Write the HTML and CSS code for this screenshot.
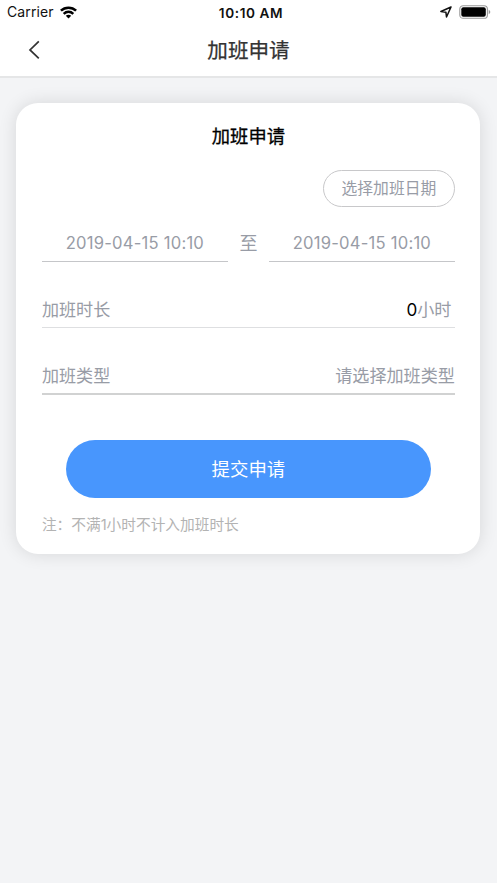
FILE: index.html
```html
<!DOCTYPE html>
<html lang="zh-CN">
<head>
<meta charset="utf-8">
<title>加班申请</title>
<link rel="stylesheet" href="styles.css">
</head>
<body>
<header class="header">
  <div class="status">
    <div class="status-left">
      <span class="carrier">Carrier</span>
      <svg class="wifi" width="17" height="13" viewBox="0 0 17 13" fill="none" stroke="#000" stroke-width="2.5"><path d="M.9 4.7C5.1.6 11.9.6 16.1 4.7M3.7 7.8c2.8-2.6 6.8-2.6 9.6 0"/><path d="M8.5 12.4 5.8 9.8c1.5-1.4 3.9-1.4 5.4 0z" fill="#000" stroke="none"/></svg>
    </div>
    <span class="time">10:10 AM</span>
    <div class="status-right">
      <svg width="12" height="12" viewBox="0 0 12 12" fill="none" stroke="#111" stroke-width="1.5" stroke-linejoin="round"><path d="M11 1 .9 5.5l5 .7.6 4.8z"/></svg>
      <svg width="32" height="14" viewBox="0 0 32 14"><rect x=".8" y=".7" width="27.6" height="12.6" rx="3.4" fill="none" stroke="#999" stroke-width="1.1"/><rect x="2.3" y="2.3" width="24.5" height="9.4" rx="2" fill="#000"/><path d="M29.7 4.8q1.6.7 1.6 2.2t-1.6 2.2z" fill="#999"/></svg>
    </div>
  </div>
  <nav class="nav">
    <svg class="back" width="12" height="20" viewBox="0 0 12 20" fill="none" stroke="#333" stroke-width="1.7"><path d="M10.8 1.3 2 9.9l8.8 8.4"/></svg>
    <h1 class="nav-title">加班申请</h1>
  </nav>
</header>
<main class="card">
  <h2 class="card-title">加班申请</h2>
  <button class="pick">选择加班日期</button>
  <div class="range">
    <div class="date">2019-04-15 10:10</div>
    <div class="to">至</div>
    <div class="date">2019-04-15 10:10</div>
  </div>
  <div class="row duration">
    <span>加班时长</span>
    <span class="hours"><b class="count">0</b>小时</span>
  </div>
  <div class="row type">
    <span>加班类型</span>
    <span>请选择加班类型</span>
  </div>
  <button class="submit">提交申请</button>
  <p class="note">注：不满1小时不计入加班时长</p>
</main>
</body>
</html>
```
FILE: styles.css
```css
* { box-sizing: border-box; }
body {
  margin: 0;
  min-height: 883px;
  background: #f3f4f6;
  font-family: Inter, "Noto Sans CJK SC", sans-serif;
  color: #989ca6;
}
h1, h2, p { margin: 0; }
button { font-family: inherit; padding: 0; }
.header {
  height: 78px;
  background: #fff;
  border-bottom: 2px solid #e5e6e7;
}
.status {
  display: grid;
  grid-template-columns: 1fr auto 1fr;
  align-items: center;
  height: 25px;
  padding: 0 6px 0 7px;
  color: #111;
}
.status-left { display: flex; align-items: center; gap: 7px; }
.wifi { margin: 0 0 1px -1px; }
.carrier { font-size: 14px; line-height: 24px; letter-spacing: .1px; padding-bottom: 1px; }
.time { font-size: 13.6px; font-weight: 600; line-height: 24px; padding: 0 0 0 4px; letter-spacing: .6px; }
.status-right { display: flex; align-items: center; justify-content: flex-end; gap: 7px; padding-bottom: 1px; }
.nav {
  display: grid;
  grid-template-columns: 40px 1fr 40px;
  align-items: center;
  height: 50px;
}
.back { margin-left: 28px; }
.nav-title {
  text-align: center;
  font-size: 20.6px;
  font-weight: 400;
  line-height: 48px;
  padding-top: 2px;
  color: #333;
  -webkit-text-stroke: .25px #333;
}
.card {
  display: flex;
  flex-direction: column;
  width: 464px;
  height: 451px;
  margin: 25px 0 0 16.4px;
  padding: 18px 25.5px 0;
  border-radius: 22px;
  background: #fff;
  box-shadow: 0 0 18px rgba(0, 0, 0, .12);
}
.card-title {
  text-align: center;
  font-size: 18.3px;
  font-weight: 400;
  line-height: 30px;
  color: #000;
  -webkit-text-stroke: .3px #000;
}
.pick {
  align-self: flex-end;
  width: 132px;
  height: 37px;
  margin-top: 19px;
  border: 1px solid #c8c8ca;
  border-radius: 19px;
  background: #fff;
  color: #989ca6;
  font-size: 15.8px;
  line-height: 35px;
}
.range { display: flex; height: 55px; }
.date {
  flex: 1;
  text-align: center;
  font-size: 16.6px;
  letter-spacing: .22px;
  line-height: 73px;
  border-bottom: 1.5px solid #c5c6c9;
}
.to { width: 41px; text-align: center; font-size: 18px; line-height: 73px; }
.row {
  display: flex;
  justify-content: space-between;
  font-size: 17.1px;
}
.duration {
  height: 66px;
  line-height: 96px;
  border-bottom: 1px solid #dedfe1;
}
.hours { padding-right: 3.5px; }
.count { color: #000; font-weight: 400; }
.type {
  height: 67px;
  line-height: 96px;
  border-bottom: 2px solid #d1d2d2;
}
.submit {
  align-self: center;
  width: 365px;
  height: 58px;
  margin-top: 45px;
  border: 0;
  border-radius: 29px;
  background: #4896fd;
  color: #fff;
  font-size: 18.4px;
  line-height: 57px;
}
.note { margin-top: 13px; color: #b3b3b3; font-size: 14.7px; line-height: 28px; }
```
